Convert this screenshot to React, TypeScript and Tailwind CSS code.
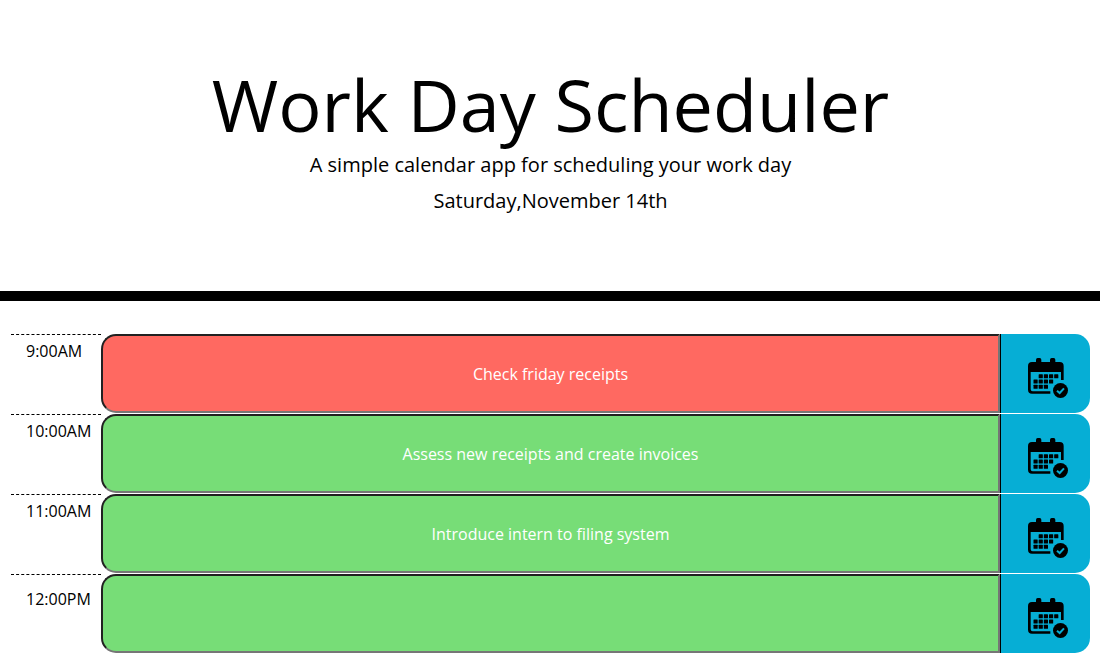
type Slot = { time: string; task: string; past?: boolean };

const slots: Slot[] = [
  { time: "9:00AM", task: "Check friday receipts", past: true },
  { time: "10:00AM", task: "Assess new receipts and create invoices" },
  { time: "11:00AM", task: "Introduce intern to filing system" },
  { time: "12:00PM", task: "" },
];

const cells = [
  [32, 49], [47.5, 49], [63, 49], [78.5, 49],
  [16.5, 64.5], [32, 64.5], [47.5, 64.5], [63, 64.5],
  [16.5, 80], [32, 80], [47.5, 80],
];

function CalendarCheck() {
  return (
    <svg viewBox="0 0 120 120" className="size-10" aria-hidden="true">
      <rect x="24" y="0" width="16" height="20" rx="5" />
      <rect x="66" y="0" width="16" height="20" rx="5" />
      <path d="M0 24Q0 12 12 12H95Q107 12 107 24V66H99V42H8V94Q8 100 14 100H67V107H12Q0 107 0 95Z" />
      {cells.map(([x, y]) => (
        <rect key={`${x}-${y}`} x={x} y={y} width="12.5" height="12" rx="1.5" />
      ))}
      <circle cx="97.5" cy="97.5" r="22.5" />
      <path d="M87 98L95 105L108 91" fill="none" stroke="#06aed5" strokeWidth="6" />
    </svg>
  );
}

function TimeRow({ time, task, past }: Slot) {
  return (
    <div className="flex h-20">
      <div
        className={`h-20 w-[90px] shrink-0 border-t border-dashed border-black pl-[15px] text-base leading-6 ${time === "12:00PM" ? "pt-3" : "pt-1"}`}
      >
        {time}
      </div>
      <div
        className={`flex h-[79px] w-[899px] shrink-0 items-center justify-center rounded-l-[15px] border-2 border-t-[#212121] border-r-[#767676] border-b-[#767676] border-l-[#212121] text-base text-white ${past ? "bg-[#ff6961]" : "bg-[#77dd77]"}`}
      >
        {task}
      </div>
      <button
        aria-label="Save"
        className="flex h-[79px] w-[90px] shrink-0 items-center rounded-r-[15px] border-l border-black bg-[#06aed5] pt-2 pl-[27px]"
      >
        <CalendarCheck />
      </button>
    </div>
  );
}

export default function App() {
  return (
    <div className="h-[654px] overflow-hidden bg-white font-['Open_Sans',sans-serif] text-base text-black">
      <header className="flex h-[301px] flex-col items-center border-b-[10px] border-black pt-[61px] pl-px text-center">
        <h1 className="text-[72px] leading-[86px] font-normal">Work Day Scheduler</h1>
        <p className="mt-[3px] text-xl leading-[30px]">A simple calendar app for scheduling your work day</p>
        <p className="mt-1.5 text-xl leading-[30px]">Saturday,November 14th</p>
      </header>
      <main className="mt-[33px] pl-[11px]">
        {slots.map((slot) => (
          <TimeRow key={slot.time} {...slot} />
        ))}
      </main>
    </div>
  );
}
